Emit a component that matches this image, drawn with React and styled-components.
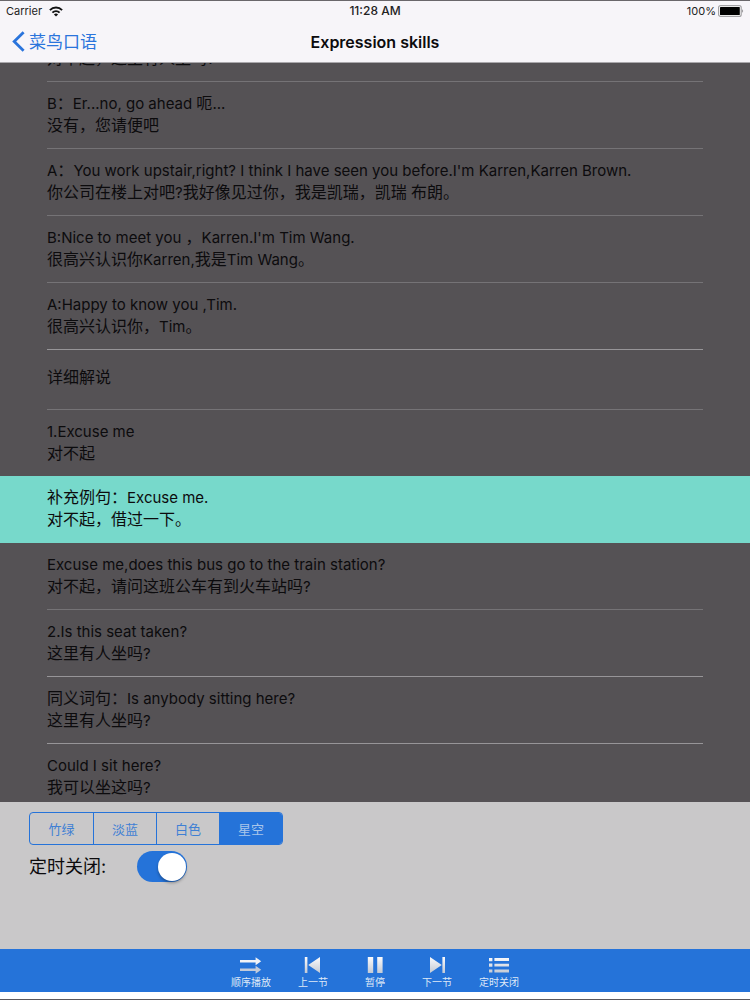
import React, { useLayoutEffect, useRef, useState } from 'react';
import styled, { createGlobalStyle, css } from 'styled-components';

const GlobalStyle = createGlobalStyle`
  * {
    box-sizing: border-box;
  }
  body {
    margin: 0;
    background: #555255;
    font-family: Inter, 'Noto Sans CJK SC', sans-serif;
    color: #0c0b0d;
  }
  button {
    margin: 0;
    padding: 0;
    border: 0;
    background: none;
    font-family: inherit;
    cursor: pointer;
  }
`;

const Screen = styled.div`
  display: flex;
  flex-direction: column;
  height: 100vh;
  border-top: 1px solid #6a676b;
  border-bottom: 1px solid #5c595d;
`;

const Header = styled.header`
  flex: none;
  background: #f7f5f9;
  border-bottom: 1px solid #aaa8ac;
`;

const StatusBar = styled.div`
  display: grid;
  grid-template-columns: 1fr auto 1fr;
  align-items: center;
  height: 20px;
  padding: 0 6px;
  font-size: 11px;
  line-height: 20px;
  color: #222;
`;

const StatusSide = styled.div`
  display: flex;
  align-items: center;
  justify-content: ${(props) => (props.$end ? 'flex-end' : 'flex-start')};
  gap: ${(props) => (props.$end ? '2px' : '7px')};
`;

const Time = styled.span`
  font-size: 12px;
  font-weight: 500;
`;

const NavBar = styled.div`
  display: grid;
  grid-template-columns: 1fr auto 1fr;
  align-items: center;
  height: 41px;
  padding: 0 12px;
`;

const BackLink = styled.a`
  display: flex;
  align-items: center;
  gap: 4px;
  font-size: 17px;
  line-height: 24px;
  color: #2a74dc;
  text-decoration: none;
`;

const PageTitle = styled.h1`
  margin: 0;
  font-size: 16px;
  font-weight: 600;
  line-height: 24px;
`;

const Lesson = styled.main`
  flex: 1;
  min-height: 0;
  overflow-y: auto;
  scrollbar-width: none;
`;

const Lines = styled.ul`
  margin: 0;
  padding: 0;
  list-style: none;
`;

const Line = styled.li`
  padding: 0 47px;
  ${(props) =>
    props.$active &&
    css`
      background: #77d9cb;
    `}
`;

const LineBody = styled.div`
  padding: ${(props) => (props.$section ? '17px 0 20px' : '11px 0')};
  border-bottom: ${(props) => (props.$plain ? '0' : '1px solid')};
  border-color: ${(props) => (props.$strong ? '#979598' : '#757376')};
  ${(props) =>
    props.$active &&
    css`
      border-color: transparent;
    `}
`;

const Sentence = styled.p`
  margin: 0;
  font-size: 15px;
  line-height: 22px;
`;

const Han = styled.span`
  font-size: 16px;
  line-height: 1;
`;

const Settings = styled.section`
  flex: none;
  padding: 10px 29px 67px;
  background: #c9c8c9;
`;

const Segments = styled.div`
  display: inline-flex;
  vertical-align: top;
  border: 1px solid #2573d9;
  border-radius: 4px;
  overflow: hidden;
`;

const Segment = styled.button`
  width: 63px;
  height: 31px;
  font-size: 13px;
  color: ${(props) => (props.$on ? '#a9c6ea' : '#3f80d4')};
  background: ${(props) => (props.$on ? '#2573d9' : 'transparent')};
  & + & {
    border-left: 1px solid #2573d9;
  }
`;

const TimerRow = styled.label`
  display: flex;
  align-items: center;
  gap: 31px;
  margin-top: 6px;
  font-size: 18px;
  line-height: 31px;
`;

const Switch = styled.input`
  appearance: none;
  display: flex;
  align-items: center;
  justify-content: flex-start;
  width: 50px;
  height: 31px;
  margin: 0;
  padding: 0 1px;
  border-radius: 16px;
  background: #aaa;
  cursor: pointer;
  &::before {
    content: '';
    width: 28px;
    height: 28px;
    border-radius: 50%;
    background: #fff;
    box-shadow: 0 2px 3px rgba(0, 0, 0, 0.3);
  }
  &:checked {
    justify-content: flex-end;
    background: #2573d9;
  }
`;

const Player = styled.footer`
  flex: none;
  display: flex;
  justify-content: center;
  height: 50px;
  background: #2573d9;
  border-bottom: 7px solid #fff;
`;

const PlayerButton = styled.button`
  display: flex;
  flex-direction: column;
  align-items: center;
  width: 62px;
  padding-top: 7px;
  font-size: 10px;
  line-height: 14px;
  color: #dfe9f7;
  svg {
    flex: none;
  }
`;

const Wifi = () => (
  <svg width="14" height="11" viewBox="0 0 14 11" aria-hidden="true">
    <g fill="none" stroke="#111" strokeWidth="1.9">
      <path d="M0.9 4.1a8.6 8.6 0 0 1 12.2 0" />
      <path d="M3.4 6.7a5.1 5.1 0 0 1 7.2 0" />
    </g>
    <path d="M7 10.6 4.9 8.5a3 3 0 0 1 4.2 0z" fill="#111" />
  </svg>
);

const Battery = () => (
  <svg width="26" height="12" viewBox="0 0 26 12" aria-hidden="true">
    <rect x="0.6" y="0.6" width="22.6" height="10.8" rx="2" fill="#fff" stroke="#a3a2a5" strokeWidth="1.2" />
    <rect x="2" y="2" width="19.8" height="8" rx="0.6" fill="#000" />
    <path d="M24.2 4.2a2.2 2.2 0 0 1 0 3.6z" fill="#8a898c" />
  </svg>
);

const BackIcon = () => (
  <svg width="13" height="21" viewBox="0 0 13 21" aria-hidden="true">
    <path d="M11.6 1.2 2.2 10.5l9.4 9.3" fill="none" stroke="#2a74dc" strokeWidth="2.8" />
  </svg>
);

const icons = {
  order: (
    <>
      <path d="M0 4h15.6V1.2l5.6 4-5.6 4V6.4H0z" fill="#f1f3f7" />
      <path d="M0 12.6h15.6V9.8l5.6 4-5.6 4V15H0z" fill="#c3cbd9" />
    </>
  ),
  prev: (
    <path d="M2.8 1h2.6v16H2.8zM18 1v16L6.2 9z" fill="url(#metal)" />
  ),
  pause: (
    <path d="M3.8 1h5.4v16H3.8zM13.2 1h5.4v16h-5.4z" fill="url(#metal)" />
  ),
  next: (
    <path d="M4 1v16L15.8 9zM16.4 1H19v16h-2.6z" fill="url(#metal)" />
  ),
  timer: (
    <path
      d="M1 2h3.4v3.2H1zM6.4 2H21v2.9H6.4zM1 7.6h3.4v3.2H1zM6.4 7.7H21v2.9H6.4zM1 13.4h3.4v3.2H1zM6.4 13.5H21v2.9H6.4z"
      fill="url(#metal)"
    />
  ),
};

const Icon = ({ name }) => (
  <svg width="22" height="19" viewBox="0 0 22 19" aria-hidden="true">
    <defs>
      <linearGradient id="metal" gradientUnits="userSpaceOnUse" x1="0" y1="1" x2="0" y2="17">
        <stop offset="0" stopColor="#fbfbfd" />
        <stop offset="1" stopColor="#c4cad4" />
      </linearGradient>
    </defs>
    {icons[name]}
  </svg>
);

const lines = [
  { id: 1, zh: '对不起，这里有人坐吗?' },
  { id: 2, en: 'B：Er...no, go ahead 呃...', zh: '没有，您请便吧' },
  {
    id: 3,
    en: "A：You work upstair,right? I think I have seen you before.I'm Karren,Karren Brown.",
    zh: '你公司在楼上对吧?我好像见过你，我是凯瑞，凯瑞 布朗。',
  },
  {
    id: 4,
    en: "B:Nice to meet you ，Karren.I'm Tim Wang.",
    zh: '很高兴认识你Karren,我是Tim Wang。',
  },
  {
    id: 5,
    en: 'A:Happy to know you ,Tim.',
    zh: '很高兴认识你，Tim。',
    strong: true,
  },
  { id: 6, zh: '详细解说', section: true },
  { id: 7, en: '1.Excuse me', zh: '对不起' },
  { id: 8, en: '补充例句：Excuse me.', zh: '对不起，借过一下。' },
  {
    id: 9,
    en: 'Excuse me,does this bus go to the train station?',
    zh: '对不起，请问这班公车有到火车站吗?',
  },
  { id: 10, en: '2.Is this seat taken?', zh: '这里有人坐吗?', strong: true },
  {
    id: 11,
    en: '同义词句：Is anybody sitting here?',
    zh: '这里有人坐吗?',
    strong: true,
  },
  { id: 12, en: 'Could I sit here?', zh: '我可以坐这吗?' },
];

const themes = ['竹绿', '淡蓝', '白色', '星空'];

const controls = [
  { icon: 'order', label: '顺序播放' },
  { icon: 'prev', label: '上一节' },
  { icon: 'pause', label: '暂停' },
  { icon: 'next', label: '下一节' },
  { icon: 'timer', label: '定时关闭' },
];

const START_SCROLL = 26;

// Chinese runs are set one size larger than the latin text around them
const splitHan = (text) =>
  text
    .split(/([\u3000-\u9fff\uff00-\uffef]+)/)
    .map((part, i) => (i % 2 ? <Han key={i}>{part}</Han> : part));

const App = () => {
  const lessonRef = useRef(null);
  const [theme, setTheme] = useState('星空');
  const [timer, setTimer] = useState(true);
  const activeId = 8;

  useLayoutEffect(() => {
    lessonRef.current.scrollTop = START_SCROLL;
  }, []);

  return (
    <>
      <GlobalStyle />
      <Screen>
        <Header>
          <StatusBar>
            <StatusSide>
              Carrier <Wifi />
            </StatusSide>
            <Time>11:28 AM</Time>
            <StatusSide $end>
              100% <Battery />
            </StatusSide>
          </StatusBar>
          <NavBar>
            <BackLink href="#back">
              <BackIcon />
              菜鸟口语
            </BackLink>
            <PageTitle>Expression skills</PageTitle>
          </NavBar>
        </Header>

        <Lesson ref={lessonRef}>
          <Lines>
            {lines.map(({ id, en, zh, section, strong }) => (
              <Line key={id} $active={id === activeId}>
                <LineBody
                  $section={section}
                  $strong={strong}
                  $active={id === activeId}
                  $plain={id === activeId - 1}
                >
                  {en && <Sentence>{splitHan(en)}</Sentence>}
                  <Sentence>{splitHan(zh)}</Sentence>
                </LineBody>
              </Line>
            ))}
          </Lines>
        </Lesson>

        <Settings>
          <Segments>
            {themes.map((name) => (
              <Segment
                key={name}
                type="button"
                $on={name === theme}
                aria-pressed={name === theme}
                onClick={() => setTheme(name)}
              >
                {name}
              </Segment>
            ))}
          </Segments>
          <TimerRow>
            定时关闭:
            <Switch
              type="checkbox"
              checked={timer}
              onChange={(e) => setTimer(e.target.checked)}
            />
          </TimerRow>
        </Settings>

        <Player>
          {controls.map(({ icon, label }) => (
            <PlayerButton key={icon} type="button">
              <Icon name={icon} />
              {label}
            </PlayerButton>
          ))}
        </Player>
      </Screen>
    </>
  );
};

export default App;
